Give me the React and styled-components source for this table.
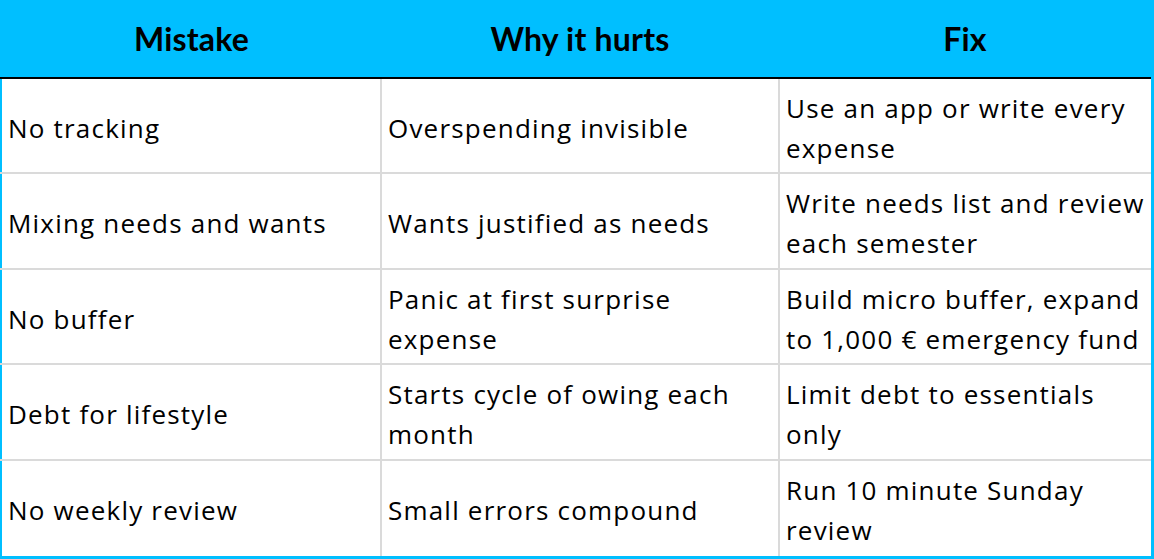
import React from "react";
import styled, { createGlobalStyle } from "styled-components";

const rows = [
  ["No tracking", "Overspending invisible", "Use an app or write every expense"],
  ["Mixing needs and wants", "Wants justified as needs", "Write needs list and review each semester"],
  ["No buffer", "Panic at first surprise expense", "Build micro buffer, expand to 1,000 € emergency fund"],
  ["Debt for lifestyle", "Starts cycle of owing each month", "Limit debt to essentials only"],
  ["No weekly review", "Small errors compound", "Run 10 minute Sunday review"],
];

function App() {
  return (
    <>
      <GlobalStyle />
      <Table>
        <colgroup>
          <col style={{ width: 380 }} />
          <col style={{ width: 398 }} />
          <col />
        </colgroup>
        <thead>
          <tr>
            <HeadCell>Mistake</HeadCell>
            <HeadCell>Why it hurts</HeadCell>
            <HeadCell>Fix</HeadCell>
          </tr>
        </thead>
        <tbody>
          {rows.map((row) => (
            <Row key={row[0]}>
              {row.map((text) => (
                <Cell key={text}>{text}</Cell>
              ))}
            </Row>
          ))}
        </tbody>
      </Table>
    </>
  );
}

export default App;

const GlobalStyle = createGlobalStyle`
  html, body {
    margin: 0;
    padding: 0;
    background: #ffffff;
  }
  body {
    font-family: "Open Sans", "Liberation Sans", sans-serif;
    color: #000000;
  }
`;

const Table = styled.table`
  width: 1154px;
  height: 559px;
  border-collapse: collapse;
  table-layout: fixed;
  border-left: 2px solid #00bfff;
  border-right: 3px solid #00bfff;
  border-bottom: 3px solid #00bfff;
`;

const HeadCell = styled.th`
  height: 78px;
  box-sizing: border-box;
  background: #00bfff;
  border-bottom: 2px solid #000000;
  font-family: Lato, "Liberation Sans", sans-serif;
  font-size: 32px;
  font-weight: 700;
  text-align: center;
  vertical-align: middle;
  padding: 0;
  letter-spacing: 0.2px;
`;

const Row = styled.tr`
  height: 95px;
  &:last-child {
    height: 97px;
  }
  & + & td {
    border-top: 2px solid #dadada;
  }
`;

const Cell = styled.td`
  box-sizing: border-box;
  font-size: 26px;
  line-height: 40px;
  letter-spacing: 1.2px;
  padding: 4px 2px 0 6px;
  vertical-align: middle;
  text-align: left;
  border-left: 2px solid #dadada;
  &:first-child {
    border-left: none;
  }
`;
